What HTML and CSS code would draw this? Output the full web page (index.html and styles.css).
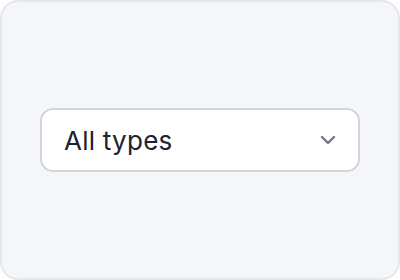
FILE: index.html
```html
<!DOCTYPE html>
<html>
<head>
<meta charset="utf-8">
<link rel="stylesheet" href="styles.css">
</head>
<body>
<div class="card">
  <div class="select">
    <span class="label">All types</span>
    <svg class="chev" width="16" height="10" viewBox="0 0 16 10"><path d="M2 2 L8 8 L14 2" fill="none" stroke="#737689" stroke-width="2.4" stroke-linecap="round" stroke-linejoin="round"/></svg>
  </div>
</div>
</body>
</html>
```
FILE: styles.css
```css
html, body { margin: 0; padding: 0; background: #ffffff; }
.card {
  box-sizing: border-box;
  width: 400px;
  height: 280px;
  background: #f5f6f8;
  border: 2px solid #e6e7ec;
  border-radius: 18px;
  display: flex;
  align-items: center;
  justify-content: center;
}
.select {
  box-sizing: border-box;
  width: 320px;
  height: 64px;
  background: #ffffff;
  border: 2px solid #d3d5dd;
  border-radius: 13px;
  display: flex;
  align-items: center;
  justify-content: space-between;
  padding: 0 22px 0 22px;
  margin-top: -1px;
}
.label {
  font-family: Inter, "Noto Sans", sans-serif;
  font-size: 26px;
  color: #1e2130;
  line-height: 1;
  margin-top: 3px;
  letter-spacing: 0.25px;
}
.chev { display: block; }
```
